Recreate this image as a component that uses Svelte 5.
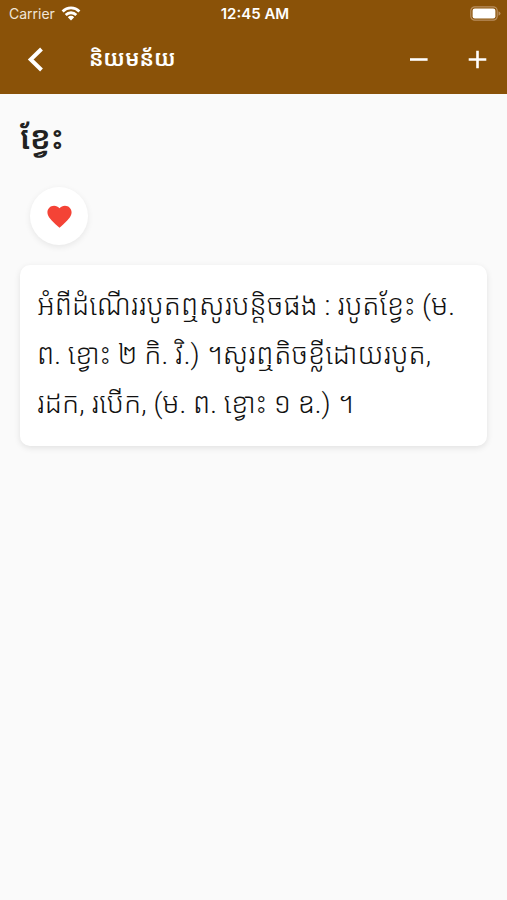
<script lang="ts">
  const title = "និយមន័យ";
  const word = "ខ្វែះ";
  const lines = [
    "អំពីដំណើររបូតឮសូរបន្តិចផង : របូតខ្វែះ (ម.",
    "ព. ខ្វោះ ២ កិ. វិ.) ។សូរឮតិចខ្លីដោយរបូត,",
    "រដក, របើក, (ម. ព. ខ្វោះ ១ ឧ.) ។",
  ];

  let size = $state(28);
  let favorite = $state(true);
</script>

<header>
  <div class="status-bar">
    <div class="carrier">
      <span>Carrier</span>
      <svg width="20" height="15" viewBox="0 0 20 15" fill="none" stroke="#fff" stroke-width="2.8" aria-hidden="true">
        <path d="M1.6 5.4a12 12 0 0 1 16.8 0" />
        <path d="M4.7 8.9a7.6 7.6 0 0 1 10.6 0" />
        <path d="M10 14.4 6.8 11.2a4.5 4.5 0 0 1 6.4 0z" fill="#fff" stroke="none" />
      </svg>
    </div>
    <time>12:45 AM</time>
    <svg class="battery" width="31" height="15" viewBox="0 0 31 15" aria-hidden="true">
      <rect x="0.8" y="0.8" width="26.4" height="13.4" rx="4" fill="none" stroke="#b98f5f" stroke-width="1.2" />
      <rect x="2.6" y="2.6" width="22.8" height="9.8" rx="2.2" fill="#fff" />
      <path d="M28.5 5.2q2 .7 2 2.3t-2 2.3z" fill="#b98f5f" />
    </svg>
  </div>

  <nav class="toolbar">
    <button class="tool" aria-label="Back">
      <svg width="28" height="28" viewBox="0 0 28 28" fill="none" stroke="#fff" stroke-width="4">
        <path d="M19.5 3 8.7 13.5 19.5 24" />
      </svg>
    </button>
    <h1>{title}</h1>
    <button class="tool" aria-label="Smaller text" onclick={() => (size -= 2)}>
      <svg width="20" height="20" viewBox="0 0 20 20" stroke="#fff" stroke-width="2.6">
        <path d="M1 9.5h17.6" />
      </svg>
    </button>
    <button class="tool" aria-label="Larger text" onclick={() => (size += 2)}>
      <svg width="20" height="20" viewBox="0 0 20 20" stroke="#fff" stroke-width="2.6">
        <path d="M.7 9.5h17.6M9.5.7v17.6" />
      </svg>
    </button>
  </nav>
</header>

<main>
  <h2>{word}</h2>

  <button class="favorite" class:off={!favorite} aria-label="Favorite" aria-pressed={favorite} onclick={() => (favorite = !favorite)}>
    <svg width="29" height="29" viewBox="0 0 24 24" aria-hidden="true">
      <path d="M12 21.35l-1.45-1.32C5.4 15.36 2 12.28 2 8.5 2 5.42 4.42 3 7.5 3c1.74 0 3.41.81 4.5 2.09C13.09 3.81 14.76 3 16.5 3 19.58 3 22 5.42 22 8.5c0 3.78-3.4 6.86-8.55 11.54L12 21.35z" />
    </svg>
  </button>

  <article style:font-size="{size}px">
    {#each lines as line}
      <p>{line}</p>
    {/each}
  </article>
</main>

<style>
  :global(body) {
    background: #fafafa;
    font-family: Roboto, "Noto Sans Khmer", "Noto Sans", sans-serif;
  }

  header {
    background: #8a5208;
    color: #fff;
  }

  .status-bar {
    display: grid;
    grid-template-columns: 1fr auto 1fr;
    align-items: center;
    height: 26px;
    padding: 0 6px 0 9px;
    font-family: Inter, sans-serif;
    font-size: 15px;
  }

  .carrier {
    display: flex;
    align-items: center;
    gap: 6px;
    color: #f0e5d8;
    font-size: 14px;
  }

  time {
    font-weight: 600;
  }

  .battery {
    justify-self: end;
  }

  .toolbar {
    display: flex;
    align-items: center;
    height: 68px;
    padding-left: 6px;
  }

  button {
    display: grid;
    place-items: center;
    padding: 0;
    border: 0;
    background: none;
    cursor: pointer;
  }

  .tool {
    width: 59px;
    height: 59px;
  }

  h1 {
    flex: 1;
    margin: 0;
    padding: 0 0 2px 24px;
    font-size: 22px;
    font-weight: 600;
    line-height: 40px;
  }

  main {
    padding: 20px;
  }

  h2 {
    margin: 0;
    color: #212121;
    font-size: 32px;
    font-weight: 600;
    line-height: 48px;
  }

  .favorite {
    width: 58px;
    height: 58px;
    margin: 25px 10px 20px;
    border-radius: 50%;
    background: #fff;
    box-shadow: 0 2px 6px rgba(0, 0, 0, 0.08);
  }

  .favorite svg {
    fill: #f44336;
  }

  .favorite.off svg {
    fill: #bdbdbd;
  }

  article {
    padding: 16px 17px 18px;
    border-radius: 10px;
    background: #fff;
    box-shadow: 0 2px 6px rgba(0, 0, 0, 0.1);
    color: #111;
    font-weight: 300;
  }

  p {
    margin: 0;
    line-height: 49px;
  }
</style>
